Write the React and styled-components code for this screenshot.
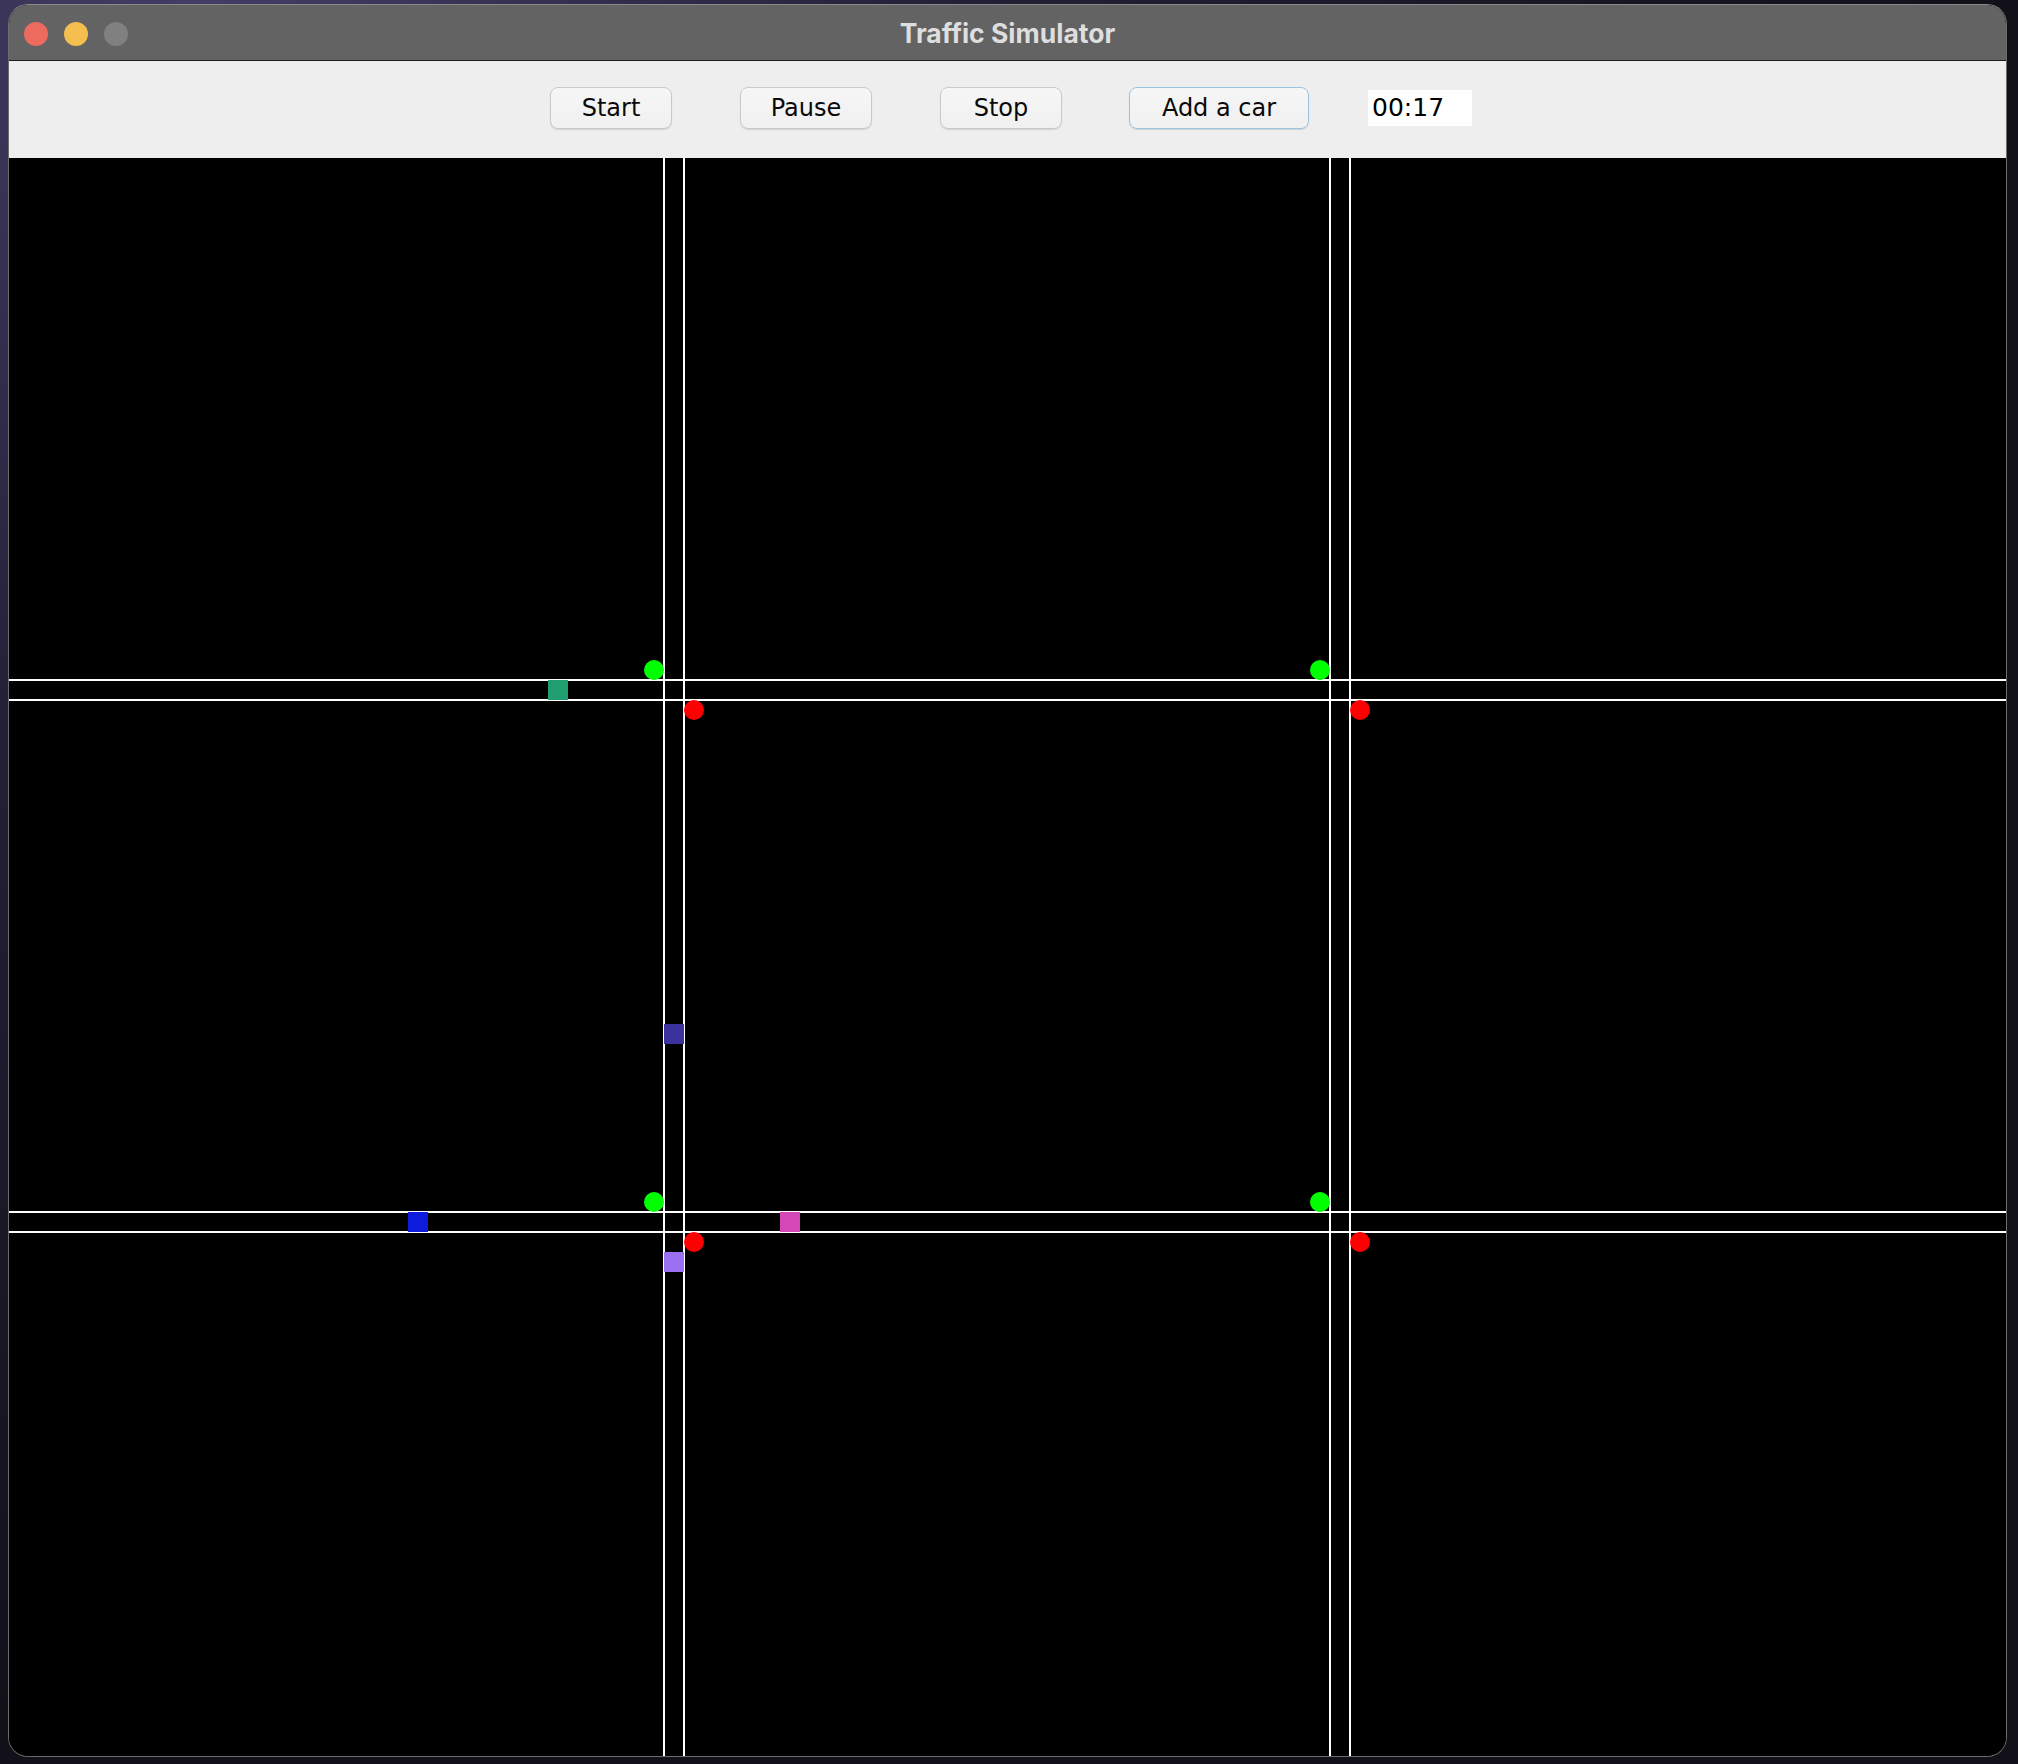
import React from "react";
import styled, { createGlobalStyle } from "styled-components";

const GlobalStyle = createGlobalStyle`
  html, body {
    margin: 0;
    padding: 0;
  }
  body {
    width: 2018px;
    height: 1764px;
    overflow: hidden;
    background: radial-gradient(ellipse at 10% 0%, #433d66 0%, #241f36 30%, #121019 70%),
      #121019;
    font-family: "DejaVu Sans", "Liberation Sans", sans-serif;
  }
`;

const Desktop = styled.div`
  padding: 4px 0 0 8px;
  box-sizing: border-box;
  width: 2018px;
  height: 1764px;
`;

const Window = styled.div`
  width: 1999px;
  height: 1753px;
  box-sizing: border-box;
  border: 1px solid #6b6b6b;
  border-top-color: #8a8a8a;
  border-radius: 20px;
  overflow: hidden;
  display: flex;
  flex-direction: column;
  background: #000;
`;

const TitleBar = styled.div`
  height: 55px;
  flex: none;
  background: #636363;
  border-bottom: 1px solid #1c1c1c;
  display: grid;
  grid-template-columns: 1fr auto 1fr;
  align-items: center;
`;

const Lights = styled.div`
  display: flex;
  gap: 16px;
  padding-left: 15px;
  padding-top: 2px;
`;

const Light = styled.span`
  width: 24px;
  height: 24px;
  border-radius: 50%;
  background: ${(p) => p.color};
`;

const Title = styled.div`
  font-family: "Inter", "Liberation Sans", sans-serif;
  font-weight: 700;
  font-size: 26.5px;
  color: #dedede;
  padding-top: 1px;
`;

const Toolbar = styled.div`
  height: 97px;
  flex: none;
  background: #eeeeee;
  display: flex;
  align-items: flex-start;
  padding: 26px 0 0 541px;
  box-sizing: border-box;
`;

const Button = styled.button`
  width: ${(p) => p.w}px;
  height: 42px;
  margin-right: ${(p) => p.gap}px;
  box-sizing: border-box;
  border: 1px solid ${(p) => (p.primary ? "#9cc3de" : "#c9c9c9")};
  border-radius: 8px;
  background: linear-gradient(#f6f6f6, #f0f0f0);
  box-shadow: 0 1px 1px rgba(0, 0, 0, 0.12);
  font-family: "DejaVu Sans", sans-serif;
  font-size: 24px;
  color: #0a0a0a;
  padding: 0;
  display: flex;
  align-items: center;
  justify-content: center;
`;

const Timer = styled.div`
  width: 104px;
  height: 36px;
  margin-top: 3px;
  background: #fff;
  font-family: "DejaVu Sans", sans-serif;
  font-size: 25px;
  color: #000;
  line-height: 36px;
  padding-left: 4px;
  box-sizing: border-box;
`;

const Canvas = styled.svg`
  display: block;
  width: 1997px;
  height: 1598px;
  background: #000;
`;

const vRoads = [663, 683, 1329, 1349];
const hRoads = [679, 699, 1211, 1231];

const greens = [
  [654, 670],
  [1320, 670],
  [654, 1202],
  [1320, 1202],
];
const reds = [
  [694, 710],
  [1360, 710],
  [694, 1242],
  [1360, 1242],
];

const cars = [
  { x: 548, y: 680, c: "#219e6f" },
  { x: 664, y: 1024, c: "#3c329e" },
  { x: 408, y: 1212, c: "#0d1bdd" },
  { x: 780, y: 1212, c: "#d447b6" },
  { x: 664, y: 1252, c: "#9b70f2" },
];

const buttons = [
  { label: "Start", w: 122, gap: 68 },
  { label: "Pause", w: 132, gap: 68 },
  { label: "Stop", w: 122, gap: 67 },
  { label: "Add a car", w: 180, gap: 59, primary: true },
];

function App() {
  return (
    <>
      <GlobalStyle />
      <Desktop>
        <Window>
          <TitleBar>
            <Lights>
              <Light color="#ed6a5e" />
              <Light color="#f5bf4f" />
              <Light color="#808080" />
            </Lights>
            <Title>Traffic Simulator</Title>
            <div />
          </TitleBar>
          <Toolbar>
            {buttons.map((b) => (
              <Button key={b.label} w={b.w} gap={b.gap} primary={b.primary}>
                {b.label}
              </Button>
            ))}
            <Timer>00:17</Timer>
          </Toolbar>
          <Canvas viewBox="9 158 1997 1598">
            {vRoads.map((x) => (
              <rect key={"v" + x} x={x} y={158} width={2} height={1598} fill="#fff" />
            ))}
            {hRoads.map((y) => (
              <rect key={"h" + y} x={9} y={y} width={1997} height={2} fill="#fff" />
            ))}
            {greens.map(([cx, cy]) => (
              <circle key={"g" + cx + cy} cx={cx} cy={cy} r={10} fill="#00ff00" />
            ))}
            {reds.map(([cx, cy]) => (
              <circle key={"r" + cx + cy} cx={cx} cy={cy} r={10} fill="#ff0000" />
            ))}
            {cars.map((car) => (
              <rect key={car.c} x={car.x} y={car.y} width={20} height={20} fill={car.c} />
            ))}
          </Canvas>
        </Window>
      </Desktop>
    </>
  );
}

export default App;
